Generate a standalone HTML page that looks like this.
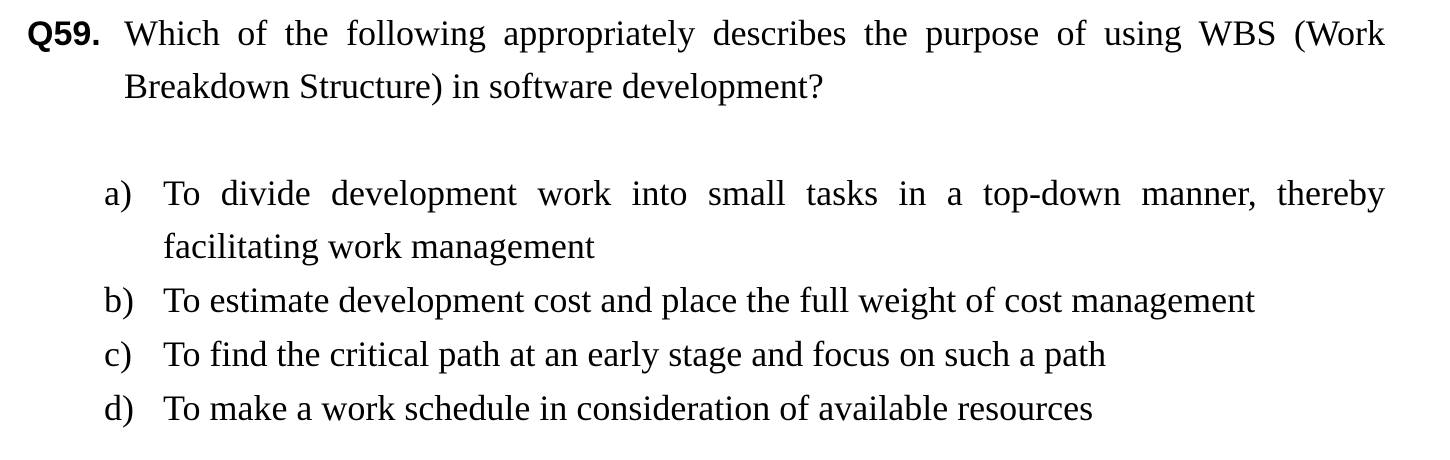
<!DOCTYPE html>
<html><head><meta charset="utf-8"><style>
body{margin:0;width:1450px;height:460px;background:#fff;overflow:hidden;position:relative;font-family:"Liberation Serif",serif;font-size:36px;color:#000}
.l{position:absolute;white-space:nowrap;line-height:40px}
.j{text-align:justify;text-align-last:justify;white-space:normal}
.q{position:absolute;left:27px;top:14px;font-family:"Liberation Sans",sans-serif;font-weight:bold;font-size:34px;line-height:40px}
</style></head><body>
<div class="q">Q59.</div>
<div class="l j" style="left:124px;top:13px;width:1261px">Which of the following appropriately describes the purpose of using WBS (Work</div>
<div class="l" style="left:124px;top:66px">Breakdown Structure) in software development?</div>
<div class="l" style="left:104px;top:173px">a)</div>
<div class="l j" style="left:163px;top:173px;width:1222px">To divide development work into small tasks in a top-down manner, thereby</div>
<div class="l" style="left:163px;top:226px">facilitating work management</div>
<div class="l" style="left:104px;top:280px">b)</div>
<div class="l" style="left:163px;top:280px">To estimate development cost and place the full weight of cost management</div>
<div class="l" style="left:104px;top:334px">c)</div>
<div class="l" style="left:163px;top:334px">To find the critical path at an early stage and focus on such a path</div>
<div class="l" style="left:104px;top:388px">d)</div>
<div class="l" style="left:163px;top:388px">To make a work schedule in consideration of available resources</div>
</body></html>
